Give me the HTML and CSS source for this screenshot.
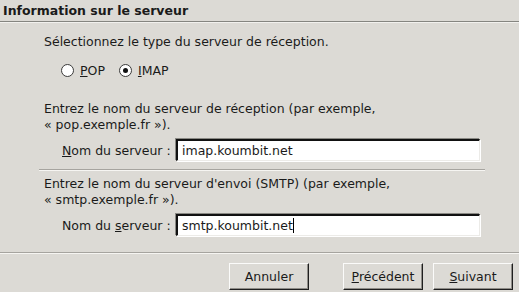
FILE: index.html
```
<!DOCTYPE html>
<html>
<head>
	<meta charset="utf-8">
	<title>Information sur le serveur</title>
	<link rel="stylesheet" href="styles.css">
</head>
<body>
	<div class="page">
		<div class="title">Information sur le serveur</div>
		<div class="body">
			<div class="block first">
				<p>Sélectionnez le type du serveur de réception.</p>
				<div class="radios">
					<label class="radio"><span class="dot"></span><span><u>P</u>OP</span></label>
					<label class="radio"><span class="dot on"></span><span><u>I</u>MAP</span></label>
				</div>
			</div>
			<div class="block">
				<p>Entrez le nom du serveur de réception (par exemple,<br>« pop.exemple.fr »).</p>
				<div class="field">
					<span class="label"><u>N</u>om du serveur :</span>
					<div class="entry">imap.koumbit.net</div>
				</div>
			</div>
			<div class="block last">
				<p>Entrez le nom du serveur d'envoi (SMTP) (par exemple,<br>« smtp.exemple.fr »).</p>
				<div class="field">
					<span class="label">Nom du <u>s</u>erveur :</span>
					<div class="entry">smtp.koumbit.net<span class="caret"></span></div>
				</div>
			</div>
		</div>
		<div class="buttons">
			<button class="btn">Annuler</button>
			<button class="btn gap"><u>P</u>récédent</button>
			<button class="btn"><u>S</u>uivant</button>
		</div>
	</div>
</body>
</html>
```
FILE: styles.css
```
* {
	margin: 0;
	padding: 0;
	box-sizing: border-box;
}
body {background: #dcdad5; font-family: "DejaVu Sans", sans-serif; font-size: 12.5px; color: #1a1a1a; width: 519px; height: 292px; overflow: hidden;}
.page {display: flex; flex-direction: column; height: 292px;}
.title {font-weight: bold; height: 22px; padding: 3px 0 0 3px; border-bottom: 1px solid #858580; box-shadow: 0 1px 0 #f2f1ee;}
.body {padding: 12px 34px 0 39px; flex: 1;}
.block {padding-left: 5px;}
.block p {line-height: 16px;}
.radios {display: flex; gap: 14px; padding: 14px 0 0 17px; height: 51px;}
.radio {display: flex; align-items: flex-start; gap: 6px; line-height: 14px;}
.radio u, .label u, .btn u {text-decoration: underline;}
.dot {width: 13px; height: 13px; border-radius: 50%; background: #fff; border: 1px solid #3a3a3a; display: flex; align-items: center; justify-content: center;}
.dot.on::after {content: ""; width: 5px; height: 5px; border-radius: 50%; background: #111;}
.field {display: flex; align-items: center; margin-top: 6px; padding-left: 18px;}
.label {width: 114px;}
.entry {width: 304px; height: 22px; background: #fff; border-top: 2px solid #111; border-left: 2px solid #111; border-right: 1px solid #ecebe8; border-bottom: 1px solid #ecebe8; box-shadow: -1px -1px 0 #8a8984, 1px 1px 0 #fff; padding: 2px 0 0 4px; line-height: 16px;}
.caret {display: inline-block; width: 1px; height: 15px; background: #000; vertical-align: -3px;}
.block + .block.last {border-top: 1px solid #a6a49f; box-shadow: inset 0 1px 0 #f6f5f2; margin-top: 8px; padding-top: 6px;}
.buttons {display: flex; justify-content: flex-end; gap: 10px; padding: 10px 6px 2px 0; border-top: 1px solid #a6a49f; box-shadow: inset 0 1px 0 #f6f5f2;}
.btn {font: inherit; color: #1a1a1a; width: 80px; height: 27px; background: #dcdad5; border: 1px solid; border-color: #fbfbfa #1f1f1f #1f1f1f #fbfbfa; box-shadow: inset -1px -1px 0 #8f8d88;}
.btn.gap {margin-left: 24px;}
```
